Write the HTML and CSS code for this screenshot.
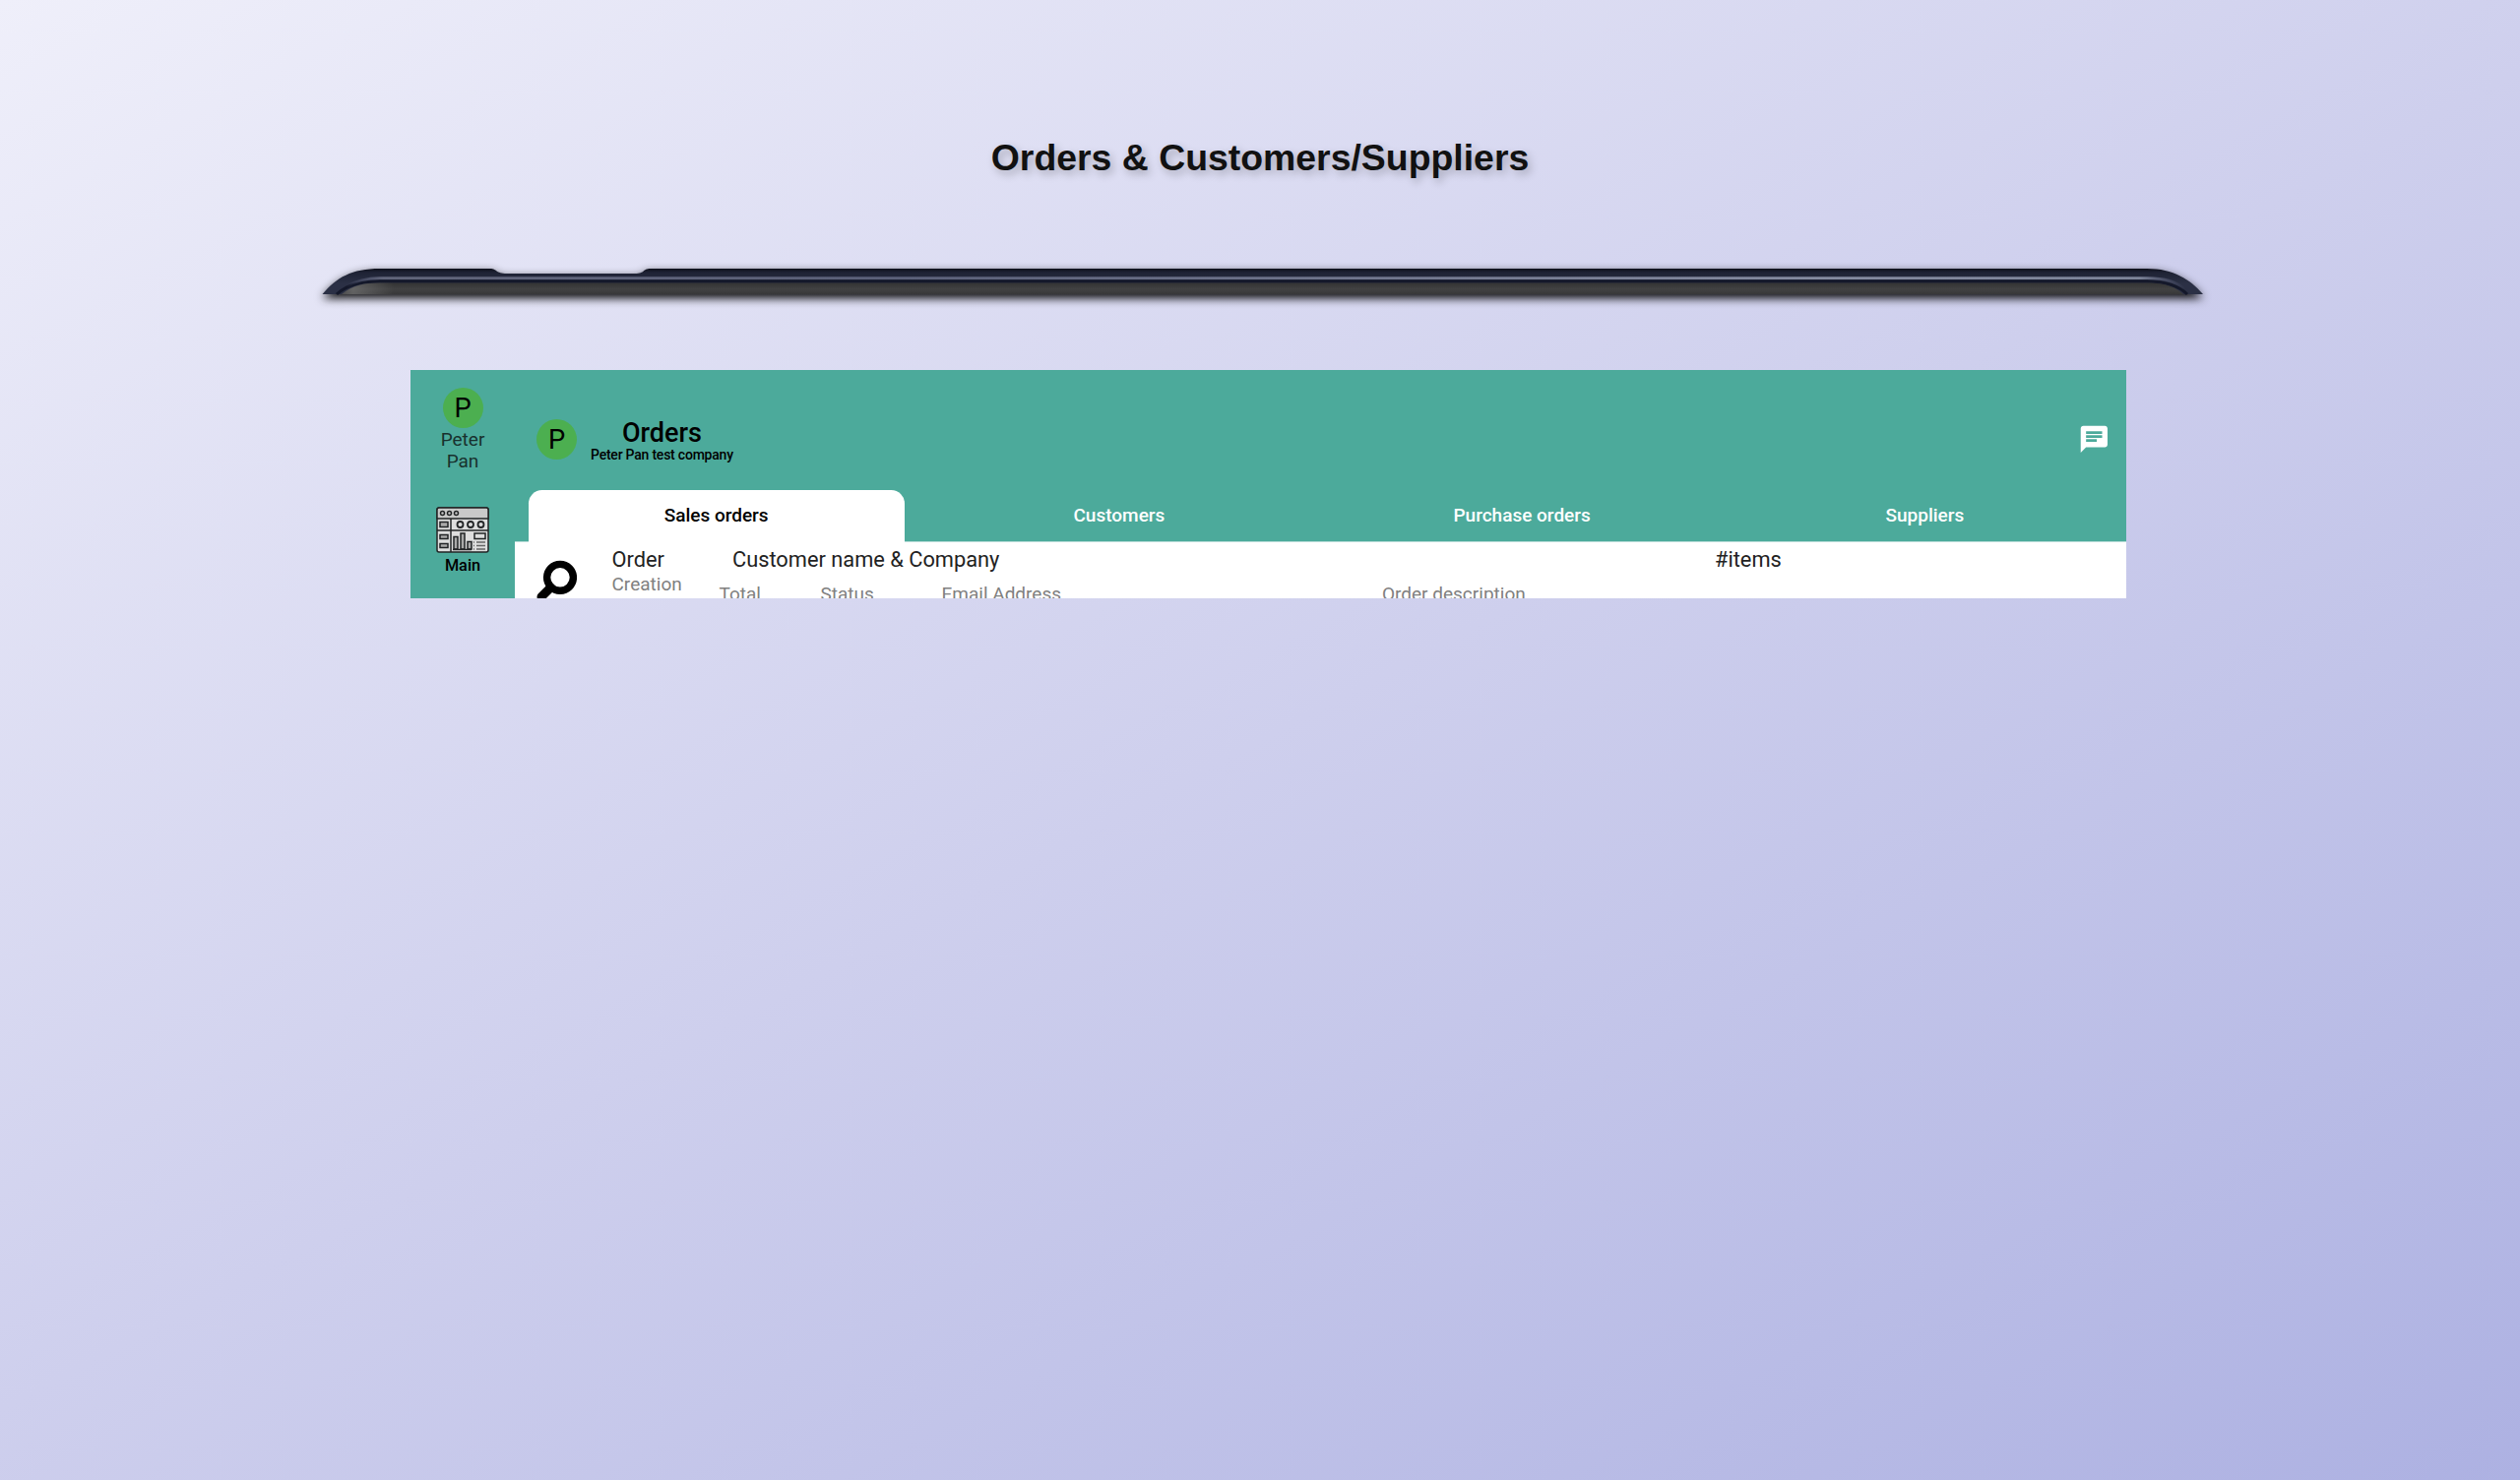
FILE: index.html
```html
<!DOCTYPE html>
<html lang="en">
<head>
<meta charset="utf-8">
<title>Orders &amp; Customers/Suppliers</title>
<link rel="stylesheet" href="styles.css">
</head>
<body>
<main class="page">
  <h1 class="heading">Orders &amp; Customers/Suppliers</h1>
  <svg class="device" viewBox="300 250 1960 80" aria-hidden="true">
    <defs>
      <linearGradient id="frame" x1="0" y1="273" x2="0" y2="288" gradientUnits="userSpaceOnUse">
        <stop offset="0" stop-color="#0d0f1a"/><stop offset=".25" stop-color="#1e2234"/><stop offset="1" stop-color="#2b3045"/>
      </linearGradient>
      <linearGradient id="screen" x1="0" y1="288" x2="0" y2="299" gradientUnits="userSpaceOnUse">
        <stop offset="0" stop-color="#343434"/><stop offset=".5" stop-color="#414142"/><stop offset="1" stop-color="#383839"/>
      </linearGradient>
      <linearGradient id="sheen" x1="352" y1="0" x2="2220" y2="0" gradientUnits="userSpaceOnUse">
        <stop offset="0" stop-color="#6b7090" stop-opacity="0"/><stop offset=".02" stop-color="#61657a"/><stop offset=".3" stop-color="#5b6079"/><stop offset=".8" stop-color="#858ba0"/><stop offset=".975" stop-color="#7d8499"/><stop offset="1" stop-color="#6b7090" stop-opacity="0"/>
      </linearGradient>
      <linearGradient id="shine" x1="345" y1="0" x2="400" y2="0" gradientUnits="userSpaceOnUse">
        <stop offset="0" stop-color="#888" stop-opacity=".2"/><stop offset=".25" stop-color="#888" stop-opacity=".5"/><stop offset="1" stop-color="#888" stop-opacity="0"/>
      </linearGradient>
    </defs>
    <g class="device-body">
      <path fill="url(#frame)" d="M327.500 299C342 282 357 273 386 273H498C505 273 503 278 515 278H645C656 278 652 273 661 273H2181C2208 273 2225 284 2238 299Z"/>
      <path fill="none" stroke="#14182a" stroke-width="3" d="M342 299C353 289 367 286 386 286H2181C2202 286 2214 291 2222 299"/>
      <path fill="none" stroke="url(#sheen)" stroke-width="2.800" d="M352 291C362 285 374 282.600 386 282.600H2181C2200 282.600 2210 286 2220 294"/>
      <path fill="url(#screen)" d="M347 299C358 290 369 287.500 386 287.500H2181C2201 287.500 2210 292 2218 299Z"/>
      <path fill="url(#shine)" d="M347 299C358 290 369 287.500 386 287.500H440V299Z"/>
    </g>
  </svg>
  <section class="app">
    <aside class="side">
      <span class="avatar">P</span>
      <span class="user">Peter<br>Pan</span>
      <svg class="dash" viewBox="0 0 54 47" fill="none" stroke="#222426" stroke-width="1.500">
        <rect x="1" y="1" width="52" height="45" rx="2" fill="#dedede"/>
        <path fill="#c9c9c9" d="M1 12V3Q1 1 3 1H51Q53 1 53 3V12Z"/>
        <path d="M15 12V46M1 24H53"/>
        <circle cx="6.500" cy="6.500" r="2"/><circle cx="13.500" cy="6.500" r="2"/><circle cx="20.500" cy="6.500" r="2"/>
        <g fill="#aaa"><path d="M4 15.500H12V20.500H4ZM4 28.500H12V32.500H4ZM4 37.500H12V41.500H4Z"/>
        <path d="M18 30.500H22V43H18ZM25 27H29V43H25ZM32 35.500H36V43H32Z"/></g>
        <path d="M17 43.500H36M39 27H50V32.500H39Z"/>
        <path stroke="#666" d="M41 36H50M41 39.500H50M41 43H50M38 36H39M38 39.500H39M38 43H39"/>
        <g stroke-width="1.800"><circle cx="24.500" cy="18" r="3"/><circle cx="35" cy="18" r="3"/><circle cx="45.500" cy="18" r="3"/></g>
      </svg>
      <span class="side-label">Main</span>
    </aside>
    <div class="content">
      <header class="bar">
        <span class="avatar">P</span>
        <div class="titles">
          <span class="title">Orders</span>
          <span class="subtitle">Peter Pan test company</span>
        </div>
        <svg class="chat" viewBox="0 0 24 24" fill="#fff"><path d="M20 2H4c-1.100 0-1.990.9-1.990 2L2 22l4-4h14c1.100 0 2-.9 2-2V4c0-1.100-.9-2-2-2zM6 9h12v2H6V9zm8 5H6v-2h8v2zm4-6H6V6h12v2z"/></svg>
      </header>
      <nav class="tabs">
        <span class="tab active">Sales orders</span>
        <span class="tab">Customers</span>
        <span class="tab">Purchase orders</span>
        <span class="tab">Suppliers</span>
      </nav>
      <div class="list">
        <svg class="search" viewBox="0 0 44 44" fill="none" stroke="#000"><circle cx="27" cy="18.800" r="13.400" stroke-width="7.400"/><path d="M17.500 29L8 38.500" stroke-width="9" stroke-linecap="round"/></svg>
        <div class="lines">
          <div class="row first">
            <span class="c-order">Order</span><span class="c-name">Customer name &amp; Company</span><span>#items</span>
          </div>
          <div class="row second">
            <span class="c-date">Creation<br>Date</span><span class="c-total">Total</span><span class="c-status">Status</span><span class="c-email">Email Address</span><span>Order description</span>
          </div>
        </div>
      </div>
    </div>
  </section>
</main>
</body>
</html>
```
FILE: styles.css
```css
* { box-sizing: border-box; }
body {
  margin: 0;
  min-height: 1504px;
  background: linear-gradient(152deg, #efeffa 0%, #cecfed 50%, #adb1e2 100%);
  font-family: Roboto, "Liberation Sans", sans-serif;
}
.page { display: flex; flex-direction: column; align-items: center; padding-top: 138px; }
.heading {
  margin: 0;
  height: 44px;
  font: bold 37.400px/44px "Liberation Sans", Arial, sans-serif;
  color: #111;
  text-shadow: 3px 4px 8px rgba(0, 0, 0, .25);
  white-space: nowrap;
}
.device { display: block; width: 1960px; height: 80px; margin-top: 68px; }
.device-body { filter: drop-shadow(0 4px 5px rgba(0, 0, 0, .95)); }
.app { display: flex; width: 1743px; height: 232px; margin: 46px 0 0 17px; overflow: hidden; background: #4caa9b; }
.side { width: 106px; flex: none; display: flex; flex-direction: column; align-items: center; padding-top: 18px; color: #000; }
.avatar {
  width: 41px; height: 41px; flex: none; border-radius: 50%; background: #4caf50; color: #000;
  font-size: 27.300px; line-height: 42px; text-align: center;
}
.user { font-size: 19px; line-height: 21.800px; text-align: center; color: #18312e; margin-top: 1px; }
.dash { width: 54px; height: 47px; margin-top: 35px; }
.side-label { font-size: 16.300px; line-height: 20px; font-weight: 500; margin-top: 3px; }
.content { flex: 1; display: flex; flex-direction: column; }
.bar { height: 122px; flex: none; display: flex; align-items: center; padding: 19px 16px 0 22px; }
.titles { display: flex; flex-direction: column; align-items: center; margin: 3px 0 0 14px; color: #000; font-weight: 500; }
.title { font-size: 27px; line-height: 28px; }
.subtitle { font-size: 14px; line-height: 16px; letter-spacing: -.22px; }
.chat { width: 32.700px; height: 32.700px; margin-left: auto; }
.tabs { height: 53px; flex: none; display: grid; grid-template-columns: repeat(4, 1fr); border-bottom: 1px solid #b8dcd7; }
.tab { font-size: 19px; line-height: 52px; font-weight: 500; text-align: center; color: #fff; }
.active { height: 53px; margin: 0 13.500px; border-radius: 13.600px 13.600px 0 0; background: #fff; color: #000; }
.list { height: 57px; flex: none; display: flex; background: #fff; padding-left: 19px; }
.search { width: 44px; height: 44px; margin-top: 17px; flex: none; }
.lines { margin-left: 35.500px; flex: 1; }
.row { display: flex; white-space: nowrap; }
.first { font-size: 21.800px; line-height: 24px; padding-top: 6px; color: #222; }
.second { font-size: 19px; line-height: 21.500px; color: #808080; align-items: center; padding-top: 1.500px; }
.c-order { width: 122.500px; }
.c-name { width: 998px; }
.c-date { width: 109px; }
.c-total { width: 103px; }
.c-status { width: 123px; }
.c-email { width: 447.500px; }
```
